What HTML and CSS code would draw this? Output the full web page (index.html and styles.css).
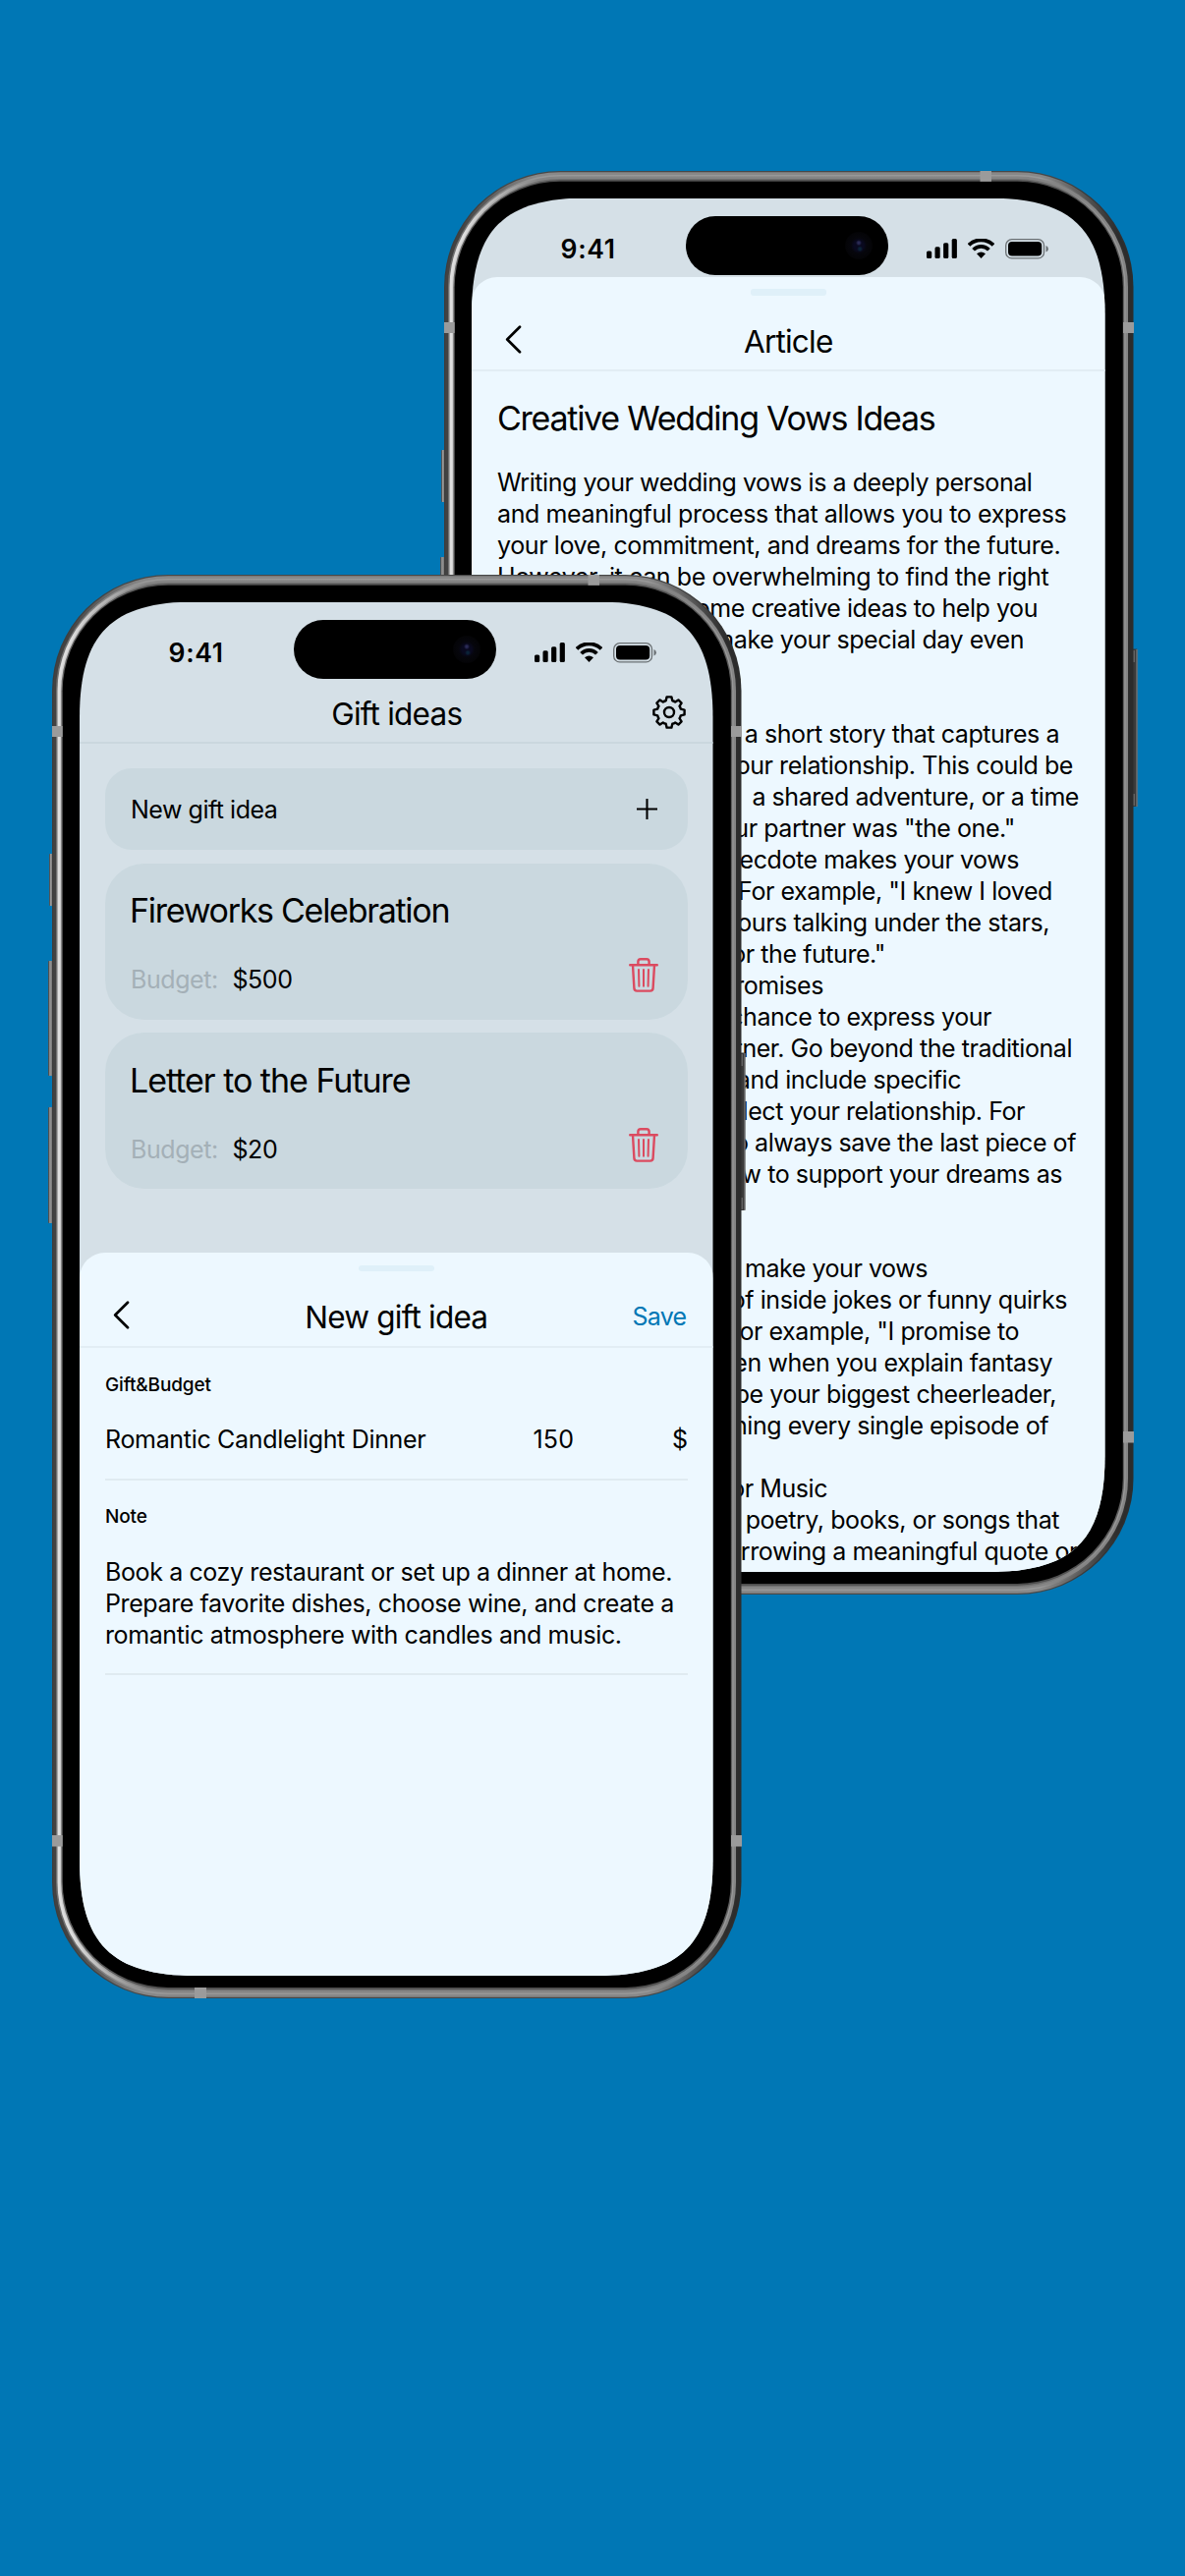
FILE: index.html
```html
<!DOCTYPE html>
<html lang="en">
<head>
<meta charset="utf-8">
<title>Wedding planner</title>
<link rel="stylesheet" href="styles.css">
</head>
<body>
<svg class="defs" width="0" height="0" aria-hidden="true">
  <defs>
    <linearGradient id="g0"><stop offset="0" stop-color="#3c3c3c"/><stop offset=".13" stop-color="#484848"/><stop offset=".87" stop-color="#484848"/><stop offset="1" stop-color="#2c2c2c"/></linearGradient>
    <linearGradient id="g1"><stop offset="0" stop-color="#424242"/><stop offset=".02" stop-color="#424242"/><stop offset=".13" stop-color="#888"/><stop offset=".87" stop-color="#888"/><stop offset=".98" stop-color="#2c2c2c"/></linearGradient>
    <linearGradient id="g2"><stop offset="0" stop-color="#707070"/><stop offset=".02" stop-color="#707070"/><stop offset=".13" stop-color="#989898"/><stop offset=".87" stop-color="#989898"/><stop offset=".98" stop-color="#2e2e2e"/></linearGradient>
    <linearGradient id="g3"><stop offset="0" stop-color="#dedede"/><stop offset=".02" stop-color="#dedede"/><stop offset=".13" stop-color="#858585"/><stop offset=".87" stop-color="#858585"/><stop offset=".98" stop-color="#858585"/></linearGradient>
    <linearGradient id="g4"><stop offset="0" stop-color="#cfcfcf"/><stop offset=".02" stop-color="#cfcfcf"/><stop offset=".13" stop-color="#707070"/><stop offset=".87" stop-color="#707070"/><stop offset=".98" stop-color="#999"/></linearGradient>
    <linearGradient id="g5"><stop offset="0" stop-color="#666"/><stop offset=".13" stop-color="#4c4c4c"/><stop offset=".87" stop-color="#4c4c4c"/><stop offset="1" stop-color="#606060"/></linearGradient>
    <linearGradient id="key" x2="1"><stop offset="0" stop-color="#333"/><stop offset=".3" stop-color="#999"/><stop offset="1" stop-color="#555"/></linearGradient>
  </defs>
  <symbol id="frame" viewBox="-5 0 712 1449">
    <g fill="url(#key)">
      <rect x="-3" y="284" width="5" height="53" rx="1"/>
      <rect x="-4" y="393" width="6" height="117" rx="1"/>
      <rect x="-4" y="542" width="6" height="118" rx="1"/>
    </g>
    <rect x="699" y="486.500" width="6.500" height="160.500" rx="1" fill="#3a3a3a"/>
    <path d="M705 487v160M702 488v12M702 634v12" stroke="#8a8a8a" stroke-width="1"/>
    <rect width="701.500" height="1449" rx="118" fill="url(#g0)"/>
    <rect x="1.200" y="1.200" width="699.100" height="1446.600" rx="117" fill="url(#g1)"/>
    <rect x="4" y="4" width="693.500" height="1441" rx="114" fill="url(#g2)"/>
    <rect x="5.500" y="5.500" width="690.500" height="1438" rx="112.500" fill="url(#g3)"/>
    <rect x="8" y="8" width="685.500" height="1433" rx="110" fill="url(#g4)"/>
    <rect x="9.300" y="9.300" width="682.900" height="1430.400" rx="109" fill="url(#g5)"/>
    <rect x="10.700" y="10.700" width="680.100" height="1427.200" rx="107.500"/>
    <path fill="#9b9b9b" d="M0 154h10.700v11H0zM0 1283h10.700v11.500H0zM691 154h11v11h-11zM691 1283h11v11.500h-11zM545.500 0h11.500v10.700h-11.500zM145 1438h12v11h-12z"/>
  </symbol>
  <symbol id="signal" viewBox="0 0 31 20">
    <rect y="12.500" width="5.200" height="7.500" rx="1.500"/><rect x="8.500" y="8.300" width="5.200" height="11.700" rx="1.500"/><rect x="17.100" y="4.200" width="5.200" height="15.800" rx="1.500"/><rect x="25.700" width="5.200" height="20" rx="1.500"/>
  </symbol>
  <symbol id="wifi" viewBox="0 0 27 20">
    <path d="M1 6.500a17.600 17.600 0 0 1 25 0M5.600 11.200a11 11 0 0 1 15.800 0" fill="none" stroke="#000" stroke-width="3.800"/>
    <path d="M9 15.300q4.500-3.500 9 0l-4.500 4.700z"/>
  </symbol>
  <symbol id="battery" viewBox="0 0 44 21">
    <rect x=".7" y=".7" width="38.800" height="19.200" rx="6" fill="none" stroke="#000" stroke-opacity=".5" stroke-width="1.300"/>
    <rect x="3" y="3" width="34.200" height="14.600" rx="4"/>
    <path d="M41.500 7q2.400 1 2.400 3.300t-2.400 3.300z" opacity=".5"/>
  </symbol>
  <symbol id="back" viewBox="0 0 17 29">
    <path d="M15 1.800 2.200 14.500 15 27.200" fill="none" stroke="#000" stroke-width="2.700" stroke-linecap="round" stroke-linejoin="round"/>
  </symbol>
  <symbol id="trash" viewBox="0 0 30 35">
    <g fill="none" stroke="#db4b60" stroke-width="2.400" stroke-linecap="round" stroke-linejoin="round">
      <path d="M1.200 7.200h27.600M9.400 7V3.800q0-2.600 2.600-2.600h6q2.600 0 2.600 2.600V7M4 7.500l1.400 23.400q.2 2.700 2.800 2.700h13.600q2.600 0 2.800-2.700L26 7.500"/>
      <path stroke-width="2" d="m10 12 .4 16.800M15 12v16.800M20 12l-.4 16.800"/>
    </g>
  </symbol>
</svg>
<main class="stage">
  <section class="phone phone-back">
    <svg class="frame"><use href="#frame"/></svg>
    <div class="screen">
      <div class="status">
        <span class="time">9:41</span>
        <span class="island"><i class="camera"></i></span>
        <span class="indicators"><svg width="31" height="20"><use href="#signal"/></svg><svg width="27" height="20"><use href="#wifi"/></svg><svg width="44" height="21"><use href="#battery"/></svg></span>
      </div>
      <div class="sheet">
        <div class="handle"></div>
        <header class="nav"><svg class="chevron" width="17" height="29"><use href="#back"/></svg><h2>Article</h2></header>
        <article class="article">
          <h1>Creative Wedding Vows Ideas</h1>
          <p class="line">Writing your wedding vows is a deeply personal</p>
          <p class="line loose">and meaningful process that allows you to express</p>
          <p class="line loose">your love, commitment, and dreams for the future.</p>
          <p class="line loose">However, it can be overwhelming to find the right</p>
          <p class="line end" style="width:550px">some creative ideas to help you</p>
          <p class="line end" style="width:536px">make your special day even</p>
          <p class="line"></p>
          <p class="line"></p>
          <p class="line end" style="width:572px">a short story that captures a</p>
          <p class="line end" style="width:586px">your relationship. This could be</p>
          <p class="line end" style="width:592px">a shared adventure, or a time</p>
          <p class="line end" style="width:527px">your partner was "the one."</p>
          <p class="line end" style="width:531px">anecdote makes your vows</p>
          <p class="line end" style="width:565px">For example, "I knew I loved</p>
          <p class="line end" style="width:562px">hours talking under the stars,</p>
          <p class="line end" style="width:395px">for the future."</p>
          <p class="line end" style="width:332px">Promises</p>
          <p class="line end" style="width:503px">chance to express your</p>
          <p class="line end" style="width:585px">partner. Go beyond the traditional</p>
          <p class="line end" style="width:472px">and include specific</p>
          <p class="line end" style="width:537px">reflect your relationship. For</p>
          <p class="line end" style="width:589px">to always save the last piece of</p>
          <p class="line end" style="width:575px">how to support your dreams as</p>
          <p class="line"></p>
          <p class="line"></p>
          <p class="line end" style="width:438px">make your vows</p>
          <p class="line end" style="width:580px">of inside jokes or funny quirks</p>
          <p class="line end" style="width:531px">For example, "I promise to</p>
          <p class="line end" style="width:565px">listen when you explain fantasy</p>
          <p class="line end" style="width:569px">be your biggest cheerleader,</p>
          <p class="line end" style="width:561px">rewatching every single episode of</p>
          <p class="line"></p>
          <p class="line end" style="width:336px">or Music</p>
          <p class="line end" style="width:572px">poetry, books, or songs that</p>
          <p class="line end" style="width:591px">borrowing a meaningful quote or</p>
        </article>
      </div>
    </div>
  </section>

  <section class="phone phone-front">
    <svg class="frame"><use href="#frame"/></svg>
    <div class="screen">
      <div class="status">
        <span class="time">9:41</span>
        <span class="island"><i class="camera"></i></span>
        <span class="indicators"><svg width="31" height="20"><use href="#signal"/></svg><svg width="27" height="20"><use href="#wifi"/></svg><svg width="44" height="21"><use href="#battery"/></svg></span>
      </div>
      <header class="topbar">
        <h2>Gift ideas</h2>
        <svg class="gear" width="34" height="34" viewBox="-17 -17 34 34" fill="none" stroke="#000" stroke-width="2.400" stroke-linejoin="round">
          <path d="M-3.300-11.800-2.400-15.600H2.400L3.300-11.800Q4.900-11.500 6.200-10.500L9.400-12.600 12.600-9.400 10.500-6.200Q11.500-4.900 11.800-3.300L15.600-2.400V2.400L11.800 3.300Q11.500 4.900 10.500 6.200L12.600 9.400 9.400 12.600 6.200 10.500Q4.900 11.500 3.300 11.800L2.400 15.600H-2.400L-3.300 11.800Q-4.900 11.500-6.200 10.500L-9.400 12.600-12.600 9.400-10.500 6.200Q-11.500 4.900-11.800 3.300L-15.600 2.400V-2.400L-11.800-3.300Q-11.500-4.900-10.500-6.200L-12.600-9.400-9.400-12.600-6.200-10.500Q-4.900-11.500-3.300-11.800Z"/>
          <circle r="5"/>
        </svg>
      </header>
      <div class="list">
        <div class="card add"><span>New gift idea</span><svg width="21" height="21" viewBox="0 0 21 21"><path d="M10.500 0v21M0 10.500h21" stroke="#000" stroke-width="2.100"/></svg></div>
        <div class="card gift">
          <h3>Fireworks Celebration</h3>
          <div class="budget"><span class="key">Budget:</span><span>$500</span><svg class="trash" width="30" height="35"><use href="#trash"/></svg></div>
        </div>
        <div class="card gift">
          <h3 class="wide">Letter to the Future</h3>
          <div class="budget"><span class="key">Budget:</span><span>$20</span><svg class="trash" width="30" height="35"><use href="#trash"/></svg></div>
        </div>
      </div>
      <div class="sheet sheet-form">
        <div class="handle"></div>
        <header class="nav"><svg class="chevron" width="17" height="29"><use href="#back"/></svg><h2>New gift idea</h2><span class="save">Save</span></header>
        <div class="form">
          <div class="label">Gift&amp;Budget</div>
          <div class="field row"><span class="name">Romantic Candlelight Dinner</span><span class="amount">150</span><span class="currency">$</span></div>
          <div class="label note">Note</div>
          <div class="field loose">Book a cozy restaurant or set up a dinner at home.<br>Prepare favorite dishes, choose wine, and create a<br>romantic atmosphere with candles and music.</div>
        </div>
      </div>
    </div>
  </section>
</main>
</body>
</html>
```
FILE: styles.css
```css
* { box-sizing: border-box; margin: 0; padding: 0; }
body {
  background: #0077b5;
  color: #000;
  font: 400 25px/32px Inter, "Liberation Sans", sans-serif;
  letter-spacing: -0.44px;
}
.defs { display: block; }
svg { display: block; flex: none; }
h1, h2, h3 { font-weight: 400; white-space: nowrap; }
h1, h3 { font-size: 34px; line-height: 42px; letter-spacing: -1.260px; }
h2 { font-size: 31.5px; line-height: 40px; letter-spacing: -0.780px; }
h3 { letter-spacing: -1.280px; }
.wide { letter-spacing: -1.020px; }
.loose { letter-spacing: -0.390px; }

.stage {
  display: grid;
  width: 1206px;
  height: 2622px;
  overflow: hidden;
  align-items: start;
  justify-items: start;
}

/* device */
.phone {
  grid-area: 1 / 1;
  position: relative;
  width: 701.5px;
  height: 1449px;
  padding: 27.500px 29px 23px 28px;
}
.phone-back { margin: 174px 0 0 452px; }
.phone-front { margin: 585px 0 0 53px; }
.frame { position: absolute; top: 0; left: -5px; width: 712px; height: 1449px; }
.screen {
  position: relative;
  display: flex;
  flex-direction: column;
  width: 644.500px;
  height: 1398.500px;
  background: #d5e0e7;
  overflow: hidden;
  clip-path: path("M0 118C0 32.500 32.500 0 118 0H526.500C612 0 644.500 32.500 644.500 118V1280.500C644.500 1366 612 1398.500 526.500 1398.500H118C32.500 1398.500 0 1366 0 1280.500Z");
}

.status {
  display: grid;
  grid-template-columns: 217.700px 206px 1fr;
  height: 60px;
  margin-top: 18.500px;
  flex: none;
}
.time {
  padding: 16.500px 0 0 90.500px;
  font-size: 26.500px;
  font-weight: 600;
  letter-spacing: 0.700px;
}
.island {
  display: flex;
  align-items: center;
  justify-content: flex-end;
  padding-right: 16px;
  border-radius: 30px;
  background: #000;
}
.camera {
  width: 28px;
  height: 28px;
  border-radius: 50%;
  background: radial-gradient(circle at 50% 40%, #2a2a55 0 1px, transparent 3px), radial-gradient(circle at 54% 62%, #0a2338 0 1px, transparent 3px), radial-gradient(circle, #09091f 0 5px, #06060c 8px, #040406 14px);
}
.indicators {
  display: flex;
  gap: 11.300px;
  align-items: flex-start;
  padding: 22.500px 0 0 39px;
}

/* sheets */
.sheet {
  flex: 1 0 auto;
  margin-top: 1.700px;
  padding-top: 12.500px;
  border-radius: 26px 26px 0 0;
  background: #edf8ff;
}
.sheet-form {
  position: absolute;
  left: 0;
  right: 0;
  bottom: 0;
  height: 736px;
  margin: 0;
}
.handle {
  width: 77px;
  height: 6.500px;
  margin: 0 auto;
  border-radius: 3px;
  background: #dff0f9;
}
.nav {
  display: grid;
  grid-template-columns: 1fr auto 1fr;
  align-items: center;
  height: 77.500px;
  padding: 27px 26px 8.500px 34px;
  border-bottom: 2px solid #e2edf4;
}
.nav h2 { padding-right: 8px; }
.chevron { margin-top: -5px; }
.save { justify-self: end; margin-top: -3px; padding-right: 1px; color: #0077b5; letter-spacing: -0.700px; }

/* article */
.article { padding: 27px 26px 0; }
.article h1 { margin-bottom: 27.900px; }
.line { height: 32px; line-height: 32px; white-space: pre; }
.end { display: flex; justify-content: flex-end; }

/* gift list */
.topbar {
  display: grid;
  grid-template-columns: 1fr auto 1fr;
  align-items: center;
  height: 65.500px;
  flex: none;
  padding: 15.600px 28px 7.800px;
  border-bottom: 2px solid #cad7de;
}
.topbar h2 { grid-column: 2; padding-left: 1px; }
.gear { justify-self: end; margin-top: -3px; }
.list { display: flex; flex-direction: column; gap: 13.300px; padding: 25.800px 26px; }
.card { background: #cad8df; border-radius: 40px; padding: 0 27px 0 26px; }
.add {
  display: flex;
  align-items: center;
  justify-content: space-between;
  height: 83px;
  padding-right: 31px;
  border-radius: 27px;
}
.add span { padding-top: 1px; letter-spacing: -0.480px; }
.gift { height: 159.300px; padding-top: 27.400px; }
.gift h3 { margin-left: -1px; }
.budget { display: flex; align-items: flex-start; padding-top: 33.500px; }
.key { width: 103.500px; color: #a4b0b7; }
.trash { margin: -6.500px 2.500px 0 auto; }

/* form */
.form { padding: 26px 26px 0; }
.label { font-size: 19px; font-weight: 500; line-height: 24px; letter-spacing: -0.160px; }
.note { padding-top: 25.500px; }
.field { padding: 27.500px 0 23.500px; border-bottom: 2px solid #e0ebf1; }
.row { display: flex; }
.name { width: 435.500px; letter-spacing: -0.320px; }
.amount { letter-spacing: 0.200px; }
.currency { margin-left: auto; }
```
